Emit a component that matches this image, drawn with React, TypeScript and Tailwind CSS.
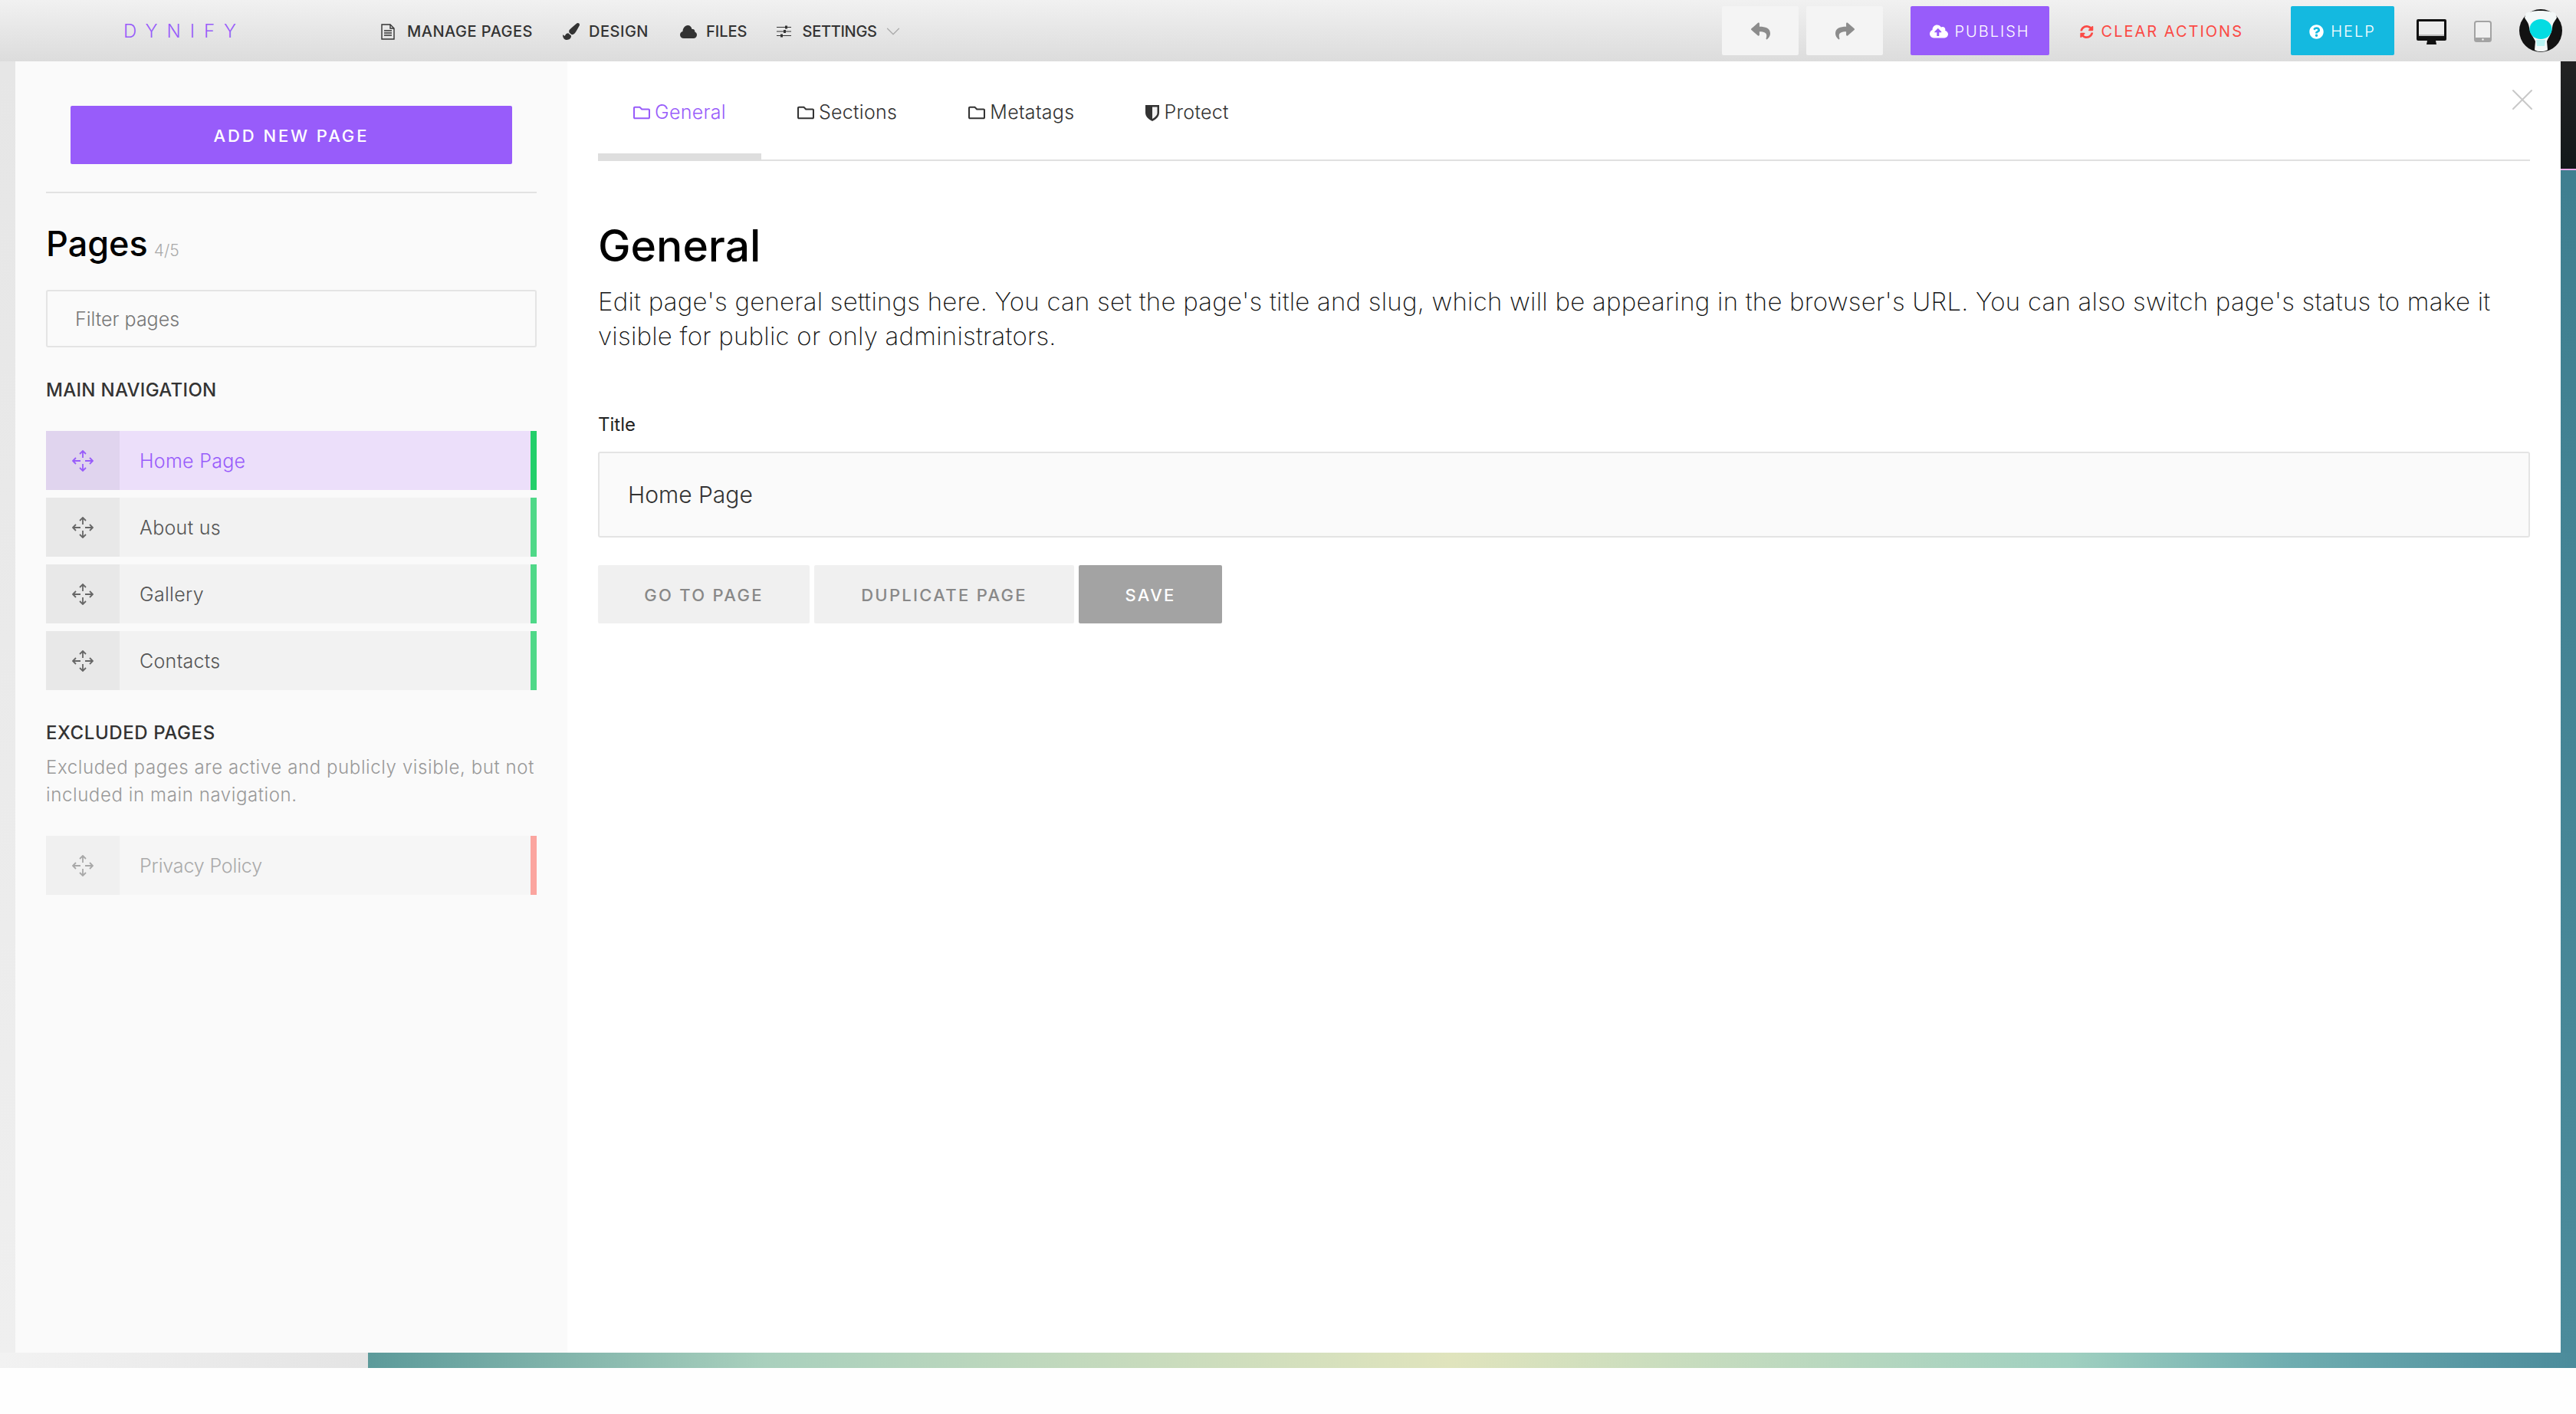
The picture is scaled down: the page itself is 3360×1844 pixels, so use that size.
import React from "react";
import { ChevronDown, X } from "lucide-react";
import {
  FaCloudUploadAlt,
  FaPaintBrush,
  FaQuestionCircle,
  FaRegFolder,
  FaReply,
  FaShare,
  FaSyncAlt,
} from "react-icons/fa";

function MoveHandle() {
  return (
    <svg width="28" height="28" viewBox="0 0 28 28" fill="none" stroke="currentColor" strokeWidth="1.800">
      <path d="M14 1v9M10 5l4-4 4 4" />
      <path d="M14 18v9M10 23l4 4 4-4" />
      <path d="M1 14h10M5 10l-4 4 4 4" />
      <path d="M17 14h10M23 10l4 4-4 4" />
    </svg>
  );
}

function FileIcon() {
  return (
    <svg width="18" height="21" viewBox="0 0 18 21" fill="none" stroke="currentColor" strokeWidth="1.400">
      <path d="M1 1h11l5 5v14H1z" />
      <path d="M12 1v5h5" />
      <path d="M4 9h10M4 12h10M4 15h10" strokeWidth="1.600" />
    </svg>
  );
}

function CloudIcon() {
  return (
    <svg width="22" height="17" viewBox="0 0 22 17" fill="currentColor">
      <path d="M5 17C2 17 0 15 0 12.500C0 10 1.500 8.500 3.500 8C3.500 4 6.500 0 10 0C13 0 15 2 15.500 5C16 5 16.500 4.800 17 5C19 5.500 19.500 7 19.300 8.500C21 9.200 22 10.700 22 12.500C22 15 20 17 17.500 17Z" />
    </svg>
  );
}

function SlidersIcon() {
  return (
    <svg width="19" height="16" viewBox="0 0 19 16" fill="currentColor">
      <path d="M0 2h19v1H0zM0 7.500h19v1H0zM0 13h19v1H0z" />
      <rect x="11" y="0.500" width="3" height="4" />
      <rect x="9" y="6" width="3" height="4" />
      <rect x="5" y="11.500" width="3" height="4" />
    </svg>
  );
}

function ShieldIcon() {
  return (
    <svg width="18" height="21" viewBox="0 0 18 21" className="shrink-0">
      <path d="M0 0h18v10c0 5-4 8.500-9 11-5-2.500-9-6-9-11z" fill="#333333" />
      <path d="M9 2.500h6.500V10c0 3.500-3 6-6.500 8z" fill="#f2f2f2" />
    </svg>
  );
}

function DesktopIcon() {
  return (
    <svg width="39" height="33" viewBox="0 0 39 33" className="shrink-0">
      <rect width="39" height="28" rx="2" fill="#111111" />
      <rect x="3" y="3" width="33" height="17" fill="#ececec" />
      <rect x="3" y="20" width="33" height="2" fill="#bdbdbd" />
      <path d="M14 28h11l1 5H13z" fill="#111111" />
    </svg>
  );
}

function TabletIcon() {
  return (
    <svg width="23" height="28" viewBox="0 0 23 28" className="shrink-0">
      <rect x="1" y="1" width="21" height="26" rx="2.500" fill="#f0f0f0" stroke="#a3a3a3" strokeWidth="2" />
      <rect x="1" y="22" width="21" height="5" fill="#a3a3a3" />
      <circle cx="11.500" cy="24.500" r="1.200" fill="#f0f0f0" />
    </svg>
  );
}

function Avatar() {
  return (
    <svg width="56" height="56" viewBox="0 0 56 56" className="shrink-0">
      <circle cx="28" cy="28" r="28" fill="#121212" />
      <path d="M9 5 C18 1 38 1 47 5 L49 11 C47 15 44 17 43 24 C42 33 37 38 36 42 L37 53 C32 56 24 56 20 53 L21 42 C20 38 14 33 13 24 C12 17 9 15 7 11Z" fill="#f4f8f8" />
      <ellipse cx="28" cy="26" rx="14.500" ry="13" fill="#04dce2" />
      <path d="M22 40 h12 l-1 8 h-10z" fill="#b9f4f4" />
    </svg>
  );
}

const navItems = [
  { label: "MANAGE PAGES", icon: <FileIcon />, left: "ml-[186px]", track: "tracking-[0.500px]" },
  { label: "DESIGN", icon: <FaPaintBrush className="text-[22px]" />, left: "ml-[39px]", track: "tracking-[0.500px]" },
  { label: "FILES", icon: <CloudIcon />, left: "ml-[41px]", track: "tracking-[0px]" },
  { label: "SETTINGS", icon: <SlidersIcon />, left: "ml-[38px]", track: "tracking-[-0.300px]" },
];

const mainPages = [
  { name: "Home Page", active: true },
  { name: "About us", active: false },
  { name: "Gallery", active: false },
  { name: "Contacts", active: false },
];

function Header() {
  return (
    <header className="flex h-[80px] shrink-0 items-center bg-gradient-to-b from-[#f1f1f1] to-[#dcdcdc] text-[#333]">
      <div className="ml-[161px] w-[150px] pt-[2px] text-[24px] font-light tracking-[12px] text-[#985cfa]">DYNIFY</div>
      {navItems.map((item) => (
        <div key={item.label} className={`flex items-center ${item.left} ${item.track} pt-[2px] text-[20px] font-medium`}>
          <span className="flex w-[34px] shrink-0">{item.icon}</span>
          <span>{item.label}</span>
        </div>
      ))}
      <ChevronDown size={30} strokeWidth={1} className="ml-[6px] mt-[2px] text-[#aaa]" />

      <div className="ml-auto flex items-center">
        <button className="flex h-[64px] w-[100px] items-center justify-center rounded-[2px] bg-[#f4f4f4] text-[#8c8c8c]">
          <FaReply className="text-[25px]" />
        </button>
        <button className="ml-[10px] flex h-[64px] w-[100px] items-center justify-center rounded-[2px] bg-[#f4f4f4] text-[#8c8c8c]">
          <FaShare className="text-[25px]" />
        </button>
        <button className="ml-[36px] flex h-[64px] w-[181px] items-center justify-center gap-[8px] rounded-[2px] bg-[#985cfa] pt-[2px] text-[20px] font-light tracking-[2px] text-white">
          <FaCloudUploadAlt className="text-[24px]" />
          PUBLISH
        </button>
        <div className="ml-[40px] flex w-[213px] items-center gap-[10px] whitespace-nowrap pt-[2px] text-[20px] tracking-[2px] text-[#fb4a45]">
          <FaSyncAlt className="text-[19px]" />
          CLEAR ACTIONS
        </div>
        <button className="ml-[62px] flex h-[64px] w-[135px] items-center justify-center gap-[9px] rounded-[2px] bg-[#14b9e0] pt-[2px] text-[20px] font-light tracking-[2px] text-white">
          <FaQuestionCircle className="text-[19px]" />
          HELP
        </button>
        <div className="ml-[29px] mt-[2px]">
          <DesktopIcon />
        </div>
        <div className="ml-[36px] mt-[2px]">
          <TabletIcon />
        </div>
        <div className="ml-[36px] mr-[18px]">
          <Avatar />
        </div>
      </div>
    </header>
  );
}

function PageRow({ name, active, excluded }: { name: string; active?: boolean; excluded?: boolean }) {
  const rowTone = active
    ? "bg-[#ecdffa] text-[#985cfa] tracking-[0.300px]"
    : excluded
      ? "bg-[#f6f6f6] text-[#aaaaaa] tracking-[-0.150px]"
      : "bg-[#f2f2f2] text-[#555555] tracking-[0.300px]";
  const handleTone = active ? "bg-[#e0d4ee] text-[#985cfa]" : excluded ? "bg-[#f0f0f0] text-[#a8a8a8]" : "bg-[#e8e8e8] text-[#666666]";
  const barTone = active ? "bg-[#22cf6a]" : excluded ? "bg-[#fba59f]" : "bg-[#4fd888]";
  return (
    <div className={`flex h-[77px] items-stretch ${rowTone}`}>
      <div className={`flex w-[96px] items-center justify-center ${handleTone}`}>
        <MoveHandle />
      </div>
      <div className="flex flex-1 items-center pl-[26px] pt-[2px] text-[25px] font-light">{name}</div>
      <div className={`w-[8px] ${barTone}`} />
    </div>
  );
}

function Sidebar() {
  return (
    <aside className="flex w-[720px] shrink-0 flex-col bg-[#fafafa] px-[40px] pt-[58px]">
      <button className="mx-[32px] flex h-[76px] items-center justify-center rounded-[2px] bg-[#985cfa] pt-[2px] text-[22px] font-medium tracking-[2.900px] text-white">
        ADD NEW PAGE
      </button>
      <div className="mt-[36px] h-[2px] bg-[#e2e2e2]" />
      <div className="mt-[36px] flex items-baseline">
        <h2 className="text-[45px] leading-[60px] font-medium text-black">Pages</h2>
        <span className="ml-[8px] text-[21px] font-light leading-[20px] text-[#aaaaaa]">4/5</span>
      </div>
      <input
        placeholder="Filter pages"
        className="mt-[30px] h-[75px] rounded-[3px] border-2 border-[#e4e4e4] bg-transparent pl-[36px] text-[25px] font-light outline-none placeholder:text-[#777777]"
      />
      <h3 className="mt-[40px] text-[24px] leading-[32px] font-medium tracking-[0.300px] text-[#333]">MAIN NAVIGATION</h3>
      <div className="mt-[37px] flex flex-col gap-[10px]">
        {mainPages.map((page) => (
          <PageRow key={page.name} name={page.name} active={page.active} />
        ))}
      </div>
      <h3 className="mt-[40px] text-[24px] leading-[32px] font-medium tracking-[0.600px] text-[#333]">EXCLUDED PAGES</h3>
      <p className="mt-[11px] text-[24px] leading-[36px] font-light tracking-[0.600px] text-[#999]">
        Excluded pages are active and publicly visible, but not included in main navigation.
      </p>
      <div className="mt-[35px]">
        <PageRow name="Privacy Policy" excluded />
      </div>
    </aside>
  );
}

const tabs = [
  { label: "General", icon: <FaRegFolder className="text-[22px]" />, active: true },
  { label: "Sections", icon: <FaRegFolder className="text-[22px]" />, active: false },
  { label: "Metatags", icon: <FaRegFolder className="text-[22px]" />, active: false },
  { label: "Protect", icon: <ShieldIcon />, active: false },
];

function MainPanel() {
  return (
    <main className="relative flex w-[2600px] shrink-0 flex-col bg-white px-[40px]">
      <X size={48} strokeWidth={1} className="absolute right-[26px] top-[26px] text-[#c8c8c8]" />
      <nav className="flex h-[130px] gap-[1px] border-b-2 border-[#e0e0e0]">
        {tabs.map((tab) => (
          <div
            key={tab.label}
            className={`-mb-[2px] flex h-[130px] items-center gap-[6px] px-[46px] text-[25px] font-light tracking-[0.300px] ${
              tab.active ? "border-b-[10px] border-[#dedede] pt-[14px] text-[#985cfa]" : "pt-[4px] text-[#333]"
            }`}
          >
            {tab.icon}
            {tab.label}
          </div>
        ))}
      </nav>
      <h1 className="mt-[76px] text-[57px] leading-[70px] font-medium text-black">General</h1>
      <p className="mt-[15px] text-[33px] leading-[45px] font-extralight tracking-[0.220px] text-[#111]">
        Edit page's general settings here. You can set the page's title and slug, which will be appearing in the browser's URL. You can also switch page's status to make it visible for public or only administrators.
      </p>
      <label className="mt-[75px] text-[24px] leading-[36px] text-[#222]">Title</label>
      <input
        readOnly
        value="Home Page"
        className="mt-[17px] h-[112px] rounded-[3px] border-2 border-[#e4e4e4] bg-[#fafafa] pl-[37px] text-[30px] font-light text-[#333] outline-none"
      />
      <div className="mt-[36px] flex gap-[6px] text-[22px] font-medium tracking-[2.300px]">
        <button className="h-[76px] w-[276px] rounded-[2px] bg-[#f0f0f0] pt-[2px] text-[#888888]">GO TO PAGE</button>
        <button className="h-[76px] w-[339px] rounded-[2px] bg-[#f0f0f0] pt-[2px] text-[#888888]">DUPLICATE PAGE</button>
        <button className="h-[76px] w-[187px] rounded-[2px] bg-[#a3a3a3] pt-[2px] text-white">SAVE</button>
      </div>
    </main>
  );
}

export default function App() {
  return (
    <div className="flex h-[1844px] w-[3360px] flex-col overflow-hidden bg-[#fefefe] font-[Inter,sans-serif]">
      <Header />
      <div className="flex h-[1684px] shrink-0">
        <div className="w-[20px] shrink-0 bg-gradient-to-b from-[#e6e6e6] to-[#efefef]" />
        <Sidebar />
        <MainPanel />
        <div className="flex w-[20px] shrink-0 flex-col">
          <div className="h-[140px] bg-gradient-to-b from-[#232323] to-[#12181a]" />
          <div className="h-[2px] bg-[#e8a8e8]" />
          <div className="flex-1 bg-gradient-to-b from-[#3f7f90] to-[#4b8b9b]" />
        </div>
      </div>
      <div className="flex h-[20px] shrink-0">
        <div className="w-[480px] bg-gradient-to-r from-[#f2f2f2] to-[#e4e4e4]" />
        <div className="flex-1 bg-[linear-gradient(90deg,#5c9a9a_0%,#a9d0bd_18%,#e0e4bd_49%,#a0d0c0_77%,#6fadb0_87%,#4b8b9b_100%)]" />
      </div>
    </div>
  );
}
